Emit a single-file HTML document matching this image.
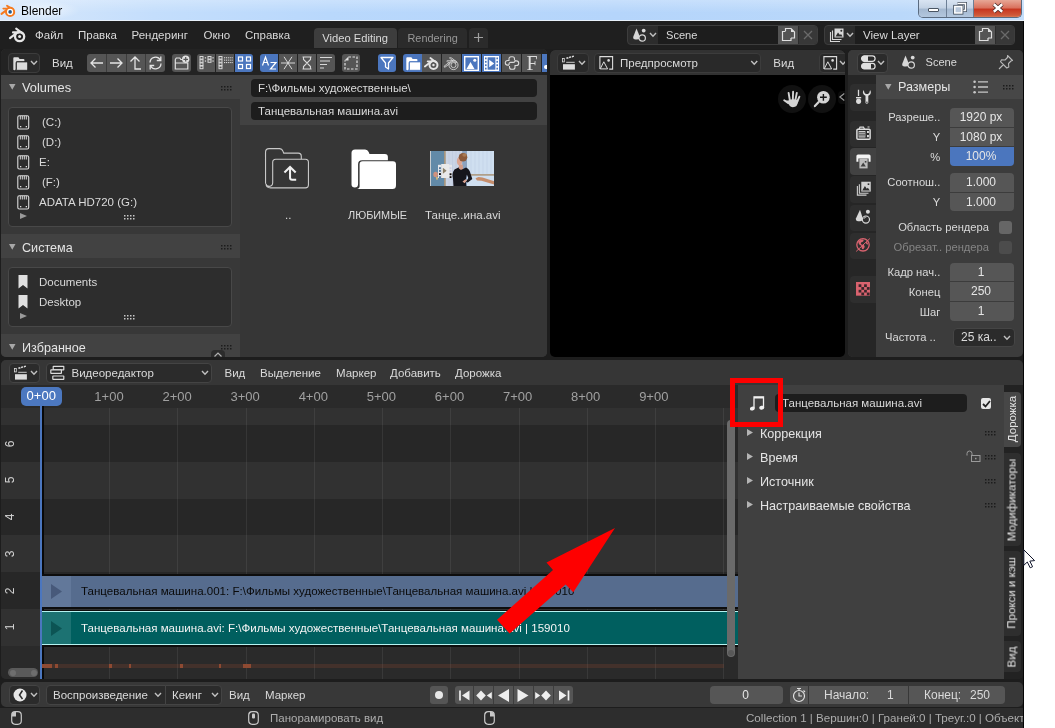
<!DOCTYPE html>
<html>
<head>
<meta charset="utf-8">
<title>Blender</title>
<style>
*{box-sizing:border-box;margin:0;padding:0}
html,body{width:1055px;height:728px;overflow:hidden;background:#fff}
body{font-family:"Liberation Sans",sans-serif;font-size:11.5px;color:#e0e0e0;position:relative}
.abs,.abs>*{position:absolute}
#win{position:absolute;left:0;top:0;width:1024px;height:728px;background:#1d1d1d;overflow:hidden;will-change:transform}
#win div,#win span,#win svg{position:absolute}
.t{white-space:pre;line-height:14px;height:14px;color:#dadada}
.b{background:#555;border-radius:3px}
.bl{background:#4b76be}
.fld{background:#1d1d1d;border-radius:4px}
.dd{background:#2a2a2a;border:1px solid #3c3c3c;border-radius:4px}
.num{background:#565656;text-align:center;padding-right:2px;color:#e6e6e6;line-height:18px;font-size:12px}
svg{overflow:visible}
</style>
</head>
<body>
<div id="win">

<!-- ===== Title bar (Win7 aero) ===== -->
<div id="title" style="left:0;top:0;width:1024px;height:21px;background:linear-gradient(90deg,#d8e8fb 0%,#c4defc 15%,#b9d8fc 32%,#b5d5fb 60%,#bad8fa 88%,#c4defb 100%)">
  <div style="left:0;top:0;width:1024px;height:21px;background:linear-gradient(180deg,rgba(255,255,255,.25) 0%,rgba(255,255,255,0) 60%)"></div>
  <div style="left:10px;top:1px;width:70px;height:19px;background:radial-gradient(ellipse at center,rgba(255,255,255,.55) 0%,rgba(255,255,255,0) 70%)"></div>
  <!-- blender logo -->
  <svg style="left:0px;top:4px" width="16" height="14" viewBox="0 0 16 14"><g stroke="#f57a1f" stroke-linecap="round" fill="none"><path d="M7 1.700L12.600 5.400" stroke-width="1.900"/><path d="M3.200 4.600H8.800" stroke-width="1.600"/><path d="M1.500 9.900L7.600 5.200" stroke-width="2"/></g><circle cx="10.100" cy="7.900" r="4.100" fill="#fff" stroke="#f57a1f" stroke-width="2"/><circle cx="10.100" cy="7.900" r="1.800" fill="#265a8c"/></svg>
  <span class="t" style="left:21px;top:4px;font-size:12px;color:#000;line-height:15px;height:15px">Blender</span>
  <!-- window buttons -->
  <div style="left:918px;top:0;width:104px;height:18px;border-radius:0 0 5px 5px;border:1px solid #5a6b80;border-top:none;background:#c5d6ea;overflow:hidden">
    <div style="left:0;top:0;width:28px;height:18px;background:linear-gradient(180deg,#d9e4f2 0%,#c3d2e4 45%,#a4b8d0 50%,#b5c9e0 100%);border-right:1px solid #6d7f96"></div>
    <div style="left:28px;top:0;width:27px;height:18px;background:linear-gradient(180deg,#d9e4f2 0%,#c3d2e4 45%,#a4b8d0 50%,#b5c9e0 100%);border-right:1px solid #6d7f96"></div>
    <div style="left:55px;top:0;width:48px;height:18px;background:linear-gradient(180deg,#e7a796 0%,#d9705c 45%,#c6351f 50%,#cf5a3b 85%,#e08d62 100%)"></div>
    <div style="left:9px;top:8px;width:11px;height:4px;background:#fff;border:1px solid #4a5563;border-radius:1px"></div>
    <svg style="left:34px;top:2px" width="14" height="13" viewBox="0 0 14 13"><path d="M4.5 1.5h8v7h-2.5" fill="none" stroke="#4a5563" stroke-width="3"/><path d="M4.5 1.5h8v7h-2.5" fill="none" stroke="#fff" stroke-width="1.4"/><rect x="1.8" y="4.5" width="7" height="6.5" fill="none" stroke="#4a5563" stroke-width="3.2"/><rect x="1.8" y="4.5" width="7" height="6.5" fill="#b9c8db" stroke="#fff" stroke-width="1.5"/></svg>
    <svg style="left:73px;top:3px" width="12" height="10" viewBox="0 0 14 12"><path d="M2 1.5 L12 10.5 M12 1.5 L2 10.5" stroke="#4b2a26" stroke-width="5" stroke-linecap="butt"/><path d="M2 1.5 L12 10.5 M12 1.5 L2 10.5" stroke="#fff" stroke-width="3" stroke-linecap="butt"/></svg>
  </div>
</div>
<div style="left:0;top:20px;width:1024px;height:1px;background:#e8f1fb"></div>

<!-- ===== Top bar ===== -->
<div id="topbar" style="left:0;top:21px;width:1024px;height:28px;background:#1f1f1f">
  <svg style="left:8px;top:6px" width="19" height="16" viewBox="0 0 19 16">
    <path d="M2 11.2 L9.4 5.4 L5 5.4 M9.8 5.4 L11 5.4 M8.2 1.6 L14.4 6.4" fill="none" stroke="#e6e6e6" stroke-width="2.1" stroke-linecap="round"/>
    <circle cx="11.6" cy="9.6" r="4.6" fill="none" stroke="#e6e6e6" stroke-width="2.3"/>
    <circle cx="11.6" cy="9.6" r="1.5" fill="#e6e6e6"/>
  </svg>
  <span class="t" style="left:35px;top:7px">Файл</span>
  <span class="t" style="left:78px;top:7px">Правка</span>
  <span class="t" style="left:131.5px;top:7px">Рендеринг</span>
  <span class="t" style="left:203.5px;top:7px">Окно</span>
  <span class="t" style="left:245px;top:7px">Справка</span>
  <div style="left:314px;top:7px;width:83px;height:19.500px;background:#3d3d3d;border-radius:4px 4px 0 0"></div>
  <span class="t" style="left:322.300px;top:10px;font-size:11.200px">Video Editing</span>
  <div style="left:398px;top:7px;width:69px;height:19.500px;background:#2b2b2b;border-radius:4px 4px 0 0"></div>
  <span class="t" style="left:407.500px;top:10px;color:#989898;font-size:10.900px">Rendering</span>
  <div style="left:469px;top:7px;width:18.500px;height:19.500px;background:#2b2b2b;border-radius:4px 4px 0 0"></div>
  <svg style="left:473px;top:11px" width="11" height="11" viewBox="0 0 11 11"><path d="M5.5 1v9M1 5.500h9" stroke="#a0a0a0" stroke-width="1.2"/></svg>

  <!-- scene selector -->
  <div style="left:627px;top:4px;width:191px;height:20px;background:#2c2c2c;border:1px solid #3d3d3d;border-radius:4px"></div>
  <div style="left:658px;top:5px;width:120px;height:18px;background:#1d1d1d"></div>
  <div style="left:778px;top:5px;width:20px;height:18px;background:#545454"></div>
  <div style="left:798.500px;top:5px;width:18.500px;height:18px;background:#383838;border-radius:0 3px 3px 0"></div>
  <svg style="left:632px;top:6px" width="16" height="16" viewBox="0 0 16 16"><path d="M4.5 1.500 L8 10 Q8 12.500 5 12.500 L3.500 12.500 Q1 12.500 1.200 10 Z" fill="#d8d8d8"/><circle cx="11.700" cy="3.600" r="1.900" fill="#d8d8d8"/><circle cx="10.200" cy="11" r="3.200" fill="#2c2c2c" stroke="#d8d8d8" stroke-width="1.200"/></svg>
  <svg style="left:649px;top:11px" width="8" height="6" viewBox="0 0 8 6"><path d="M1 1l3 3.200 3-3.200" fill="none" stroke="#c0c0c0" stroke-width="1.400"/></svg>
  <span class="t" style="left:666px;top:7px;font-size:11.100px">Scene</span>
  <svg style="left:781px;top:6px" width="15" height="15" viewBox="0 0 15 15"><path d="M4.500 4v-2.500h5.500l3.500 3.500v6h-3.500" fill="none" stroke="#e0e0e0" stroke-width="1.200"/><path d="M10 1.500v3.500h3.500z" fill="#e0e0e0"/><path d="M4.500 4.500h-3v9h8.500v-2.500" fill="none" stroke="#e0e0e0" stroke-width="1.200"/></svg>
  <svg style="left:803px;top:9px" width="10" height="10" viewBox="0 0 10 10"><path d="M1 1l8 8M9 1l-8 8" stroke="#6a6a6a" stroke-width="1.300"/></svg>

  <!-- view layer selector -->
  <div style="left:824px;top:4px;width:191px;height:20px;background:#2c2c2c;border:1px solid #3d3d3d;border-radius:4px"></div>
  <div style="left:855px;top:5px;width:120px;height:18px;background:#1d1d1d"></div>
  <div style="left:975px;top:5px;width:20px;height:18px;background:#545454"></div>
  <div style="left:995.500px;top:5px;width:18.500px;height:18px;background:#383838;border-radius:0 3px 3px 0"></div>
  <svg style="left:829px;top:6px" width="16" height="16" viewBox="0 0 16 16"><path d="M1.500 5v9.500h9.500" fill="none" stroke="#d8d8d8" stroke-width="1.100"/><path d="M3.500 3.500v9h9" fill="none" stroke="#d8d8d8" stroke-width="1.100"/><rect x="5.500" y="1.500" width="9" height="9" fill="#d8d8d8"/><path d="M6.500 9.500l2.500-4 2 2.500 1-1 1.500 2.500z" fill="#2c2c2c"/><circle cx="12.300" cy="3.800" r="1" fill="#2c2c2c"/></svg>
  <svg style="left:846px;top:11px" width="8" height="6" viewBox="0 0 8 6"><path d="M1 1l3 3.200 3-3.200" fill="none" stroke="#c0c0c0" stroke-width="1.400"/></svg>
  <span class="t" style="left:863px;top:7px">View Layer</span>
  <svg style="left:978px;top:6px" width="15" height="15" viewBox="0 0 15 15"><path d="M4.500 4v-2.500h5.500l3.500 3.500v6h-3.500" fill="none" stroke="#e0e0e0" stroke-width="1.200"/><path d="M10 1.500v3.500h3.500z" fill="#e0e0e0"/><path d="M4.500 4.500h-3v9h8.500v-2.500" fill="none" stroke="#e0e0e0" stroke-width="1.200"/></svg>
  <svg style="left:1000px;top:9px" width="10" height="10" viewBox="0 0 10 10"><path d="M1 1l8 8M9 1l-8 8" stroke="#6a6a6a" stroke-width="1.300"/></svg>
</div>

<!-- ===== File browser area ===== -->
<div id="fb" style="left:1px;top:49px;width:546.300px;height:308px;background:#383838;border-radius:5px;overflow:hidden">
  <div id="fbhead" style="left:0;top:0;width:547px;height:26px;background:#232323"></div>
  <div class="dd" style="left:7.300px;top:4px;width:31.700px;height:20px"></div>
  <svg style="left:11.700px;top:7.700px" width="15" height="13.500" viewBox="0 0 15 13.500"><path d="M.3 12.600V1.200q0-.9.900-.9h3.800q.7 0 1 .6l.5 1h4q.9 0 .9.900v1.500h-7.400q-1.300 0-1.300 1.300v6.600q0 1.100-1.200 1.100-1.200 0-1.200-.7z" fill="#dcdcdc"/><path d="M3.400 6q0-1.100 1.100-1.100h9.100q1.100 0 1.100 1.100v6.200q0 1.100-1.100 1.100h-11q1-.3.800-1.300z" fill="#dcdcdc" stroke="#2a2a2a" stroke-width=".9"/></svg>
  <svg style="left:29px;top:11px" width="8" height="6" viewBox="0 0 8 6"><path d="M1 1l3 3.200 3-3.200" fill="none" stroke="#c0c0c0" stroke-width="1.400"/></svg>
  <span class="t" style="left:51px;top:7px">Вид</span>
  <div style="left:86px;top:5px;width:78px;height:18px;background:#555;border-radius:3px"></div><div style="left:105px;top:5px;width:1px;height:18px;background:#3c3c3c"></div><div style="left:124.500px;top:5px;width:1px;height:18px;background:#3c3c3c"></div><div style="left:144px;top:5px;width:1px;height:18px;background:#3c3c3c"></div>
  
  
  
  <svg style="left:88px;top:7px" width="15" height="14" viewBox="0 0 15 14"><path d="M14 7h-12M6.500 2.500l-4.500 4.500 4.500 4.500" fill="none" stroke="#e4e4e4" stroke-width="1.300"/></svg>
  <svg style="left:108px;top:7px" width="15" height="14" viewBox="0 0 15 14"><path d="M1 7h12M8.500 2.500l4.500 4.500-4.500 4.500" fill="none" stroke="#e4e4e4" stroke-width="1.300"/></svg>
  <svg style="left:127px;top:6px" width="15" height="16" viewBox="0 0 15 16"><path d="M7 2v12h6M2.500 6.500l4.500-4.500 4.500 4.500" fill="none" stroke="#e4e4e4" stroke-width="1.300"/></svg>
  <svg style="left:147px;top:6px" width="15" height="16" viewBox="0 0 15 16"><path d="M2 7.500a5.500 5.500 0 0 1 10.300-2.500M13 8.500a5.500 5.500 0 0 1-10.300 2.500" fill="none" stroke="#e4e4e4" stroke-width="1.300"/><path d="M12.800 1.500v4h-4M2.200 14.500v-4h4" fill="none" stroke="#e4e4e4" stroke-width="1.300"/></svg>
  <div class="b" style="left:171px;top:5px;width:19px;height:18px"></div>
  <svg style="left:173px;top:6px" width="16" height="16" viewBox="0 0 16 16"><path d="M1.300 4.500v9.500h12.500v-6.500M1.300 8h12.500M1.300 4.500l1-1.500h3.500l1 1.500h2" fill="none" stroke="#e0e0e0" stroke-width="1.200"/><circle cx="11.700" cy="4.300" r="3.700" fill="#e0e0e0"/><path d="M11.700 2v4.600M9.400 4.300h4.600" stroke="#555" stroke-width="1.200"/></svg>
  <div style="left:196px;top:5px;width:18px;height:18px;background:#555;border-radius:3px 0 0 3px"></div>
  <div style="left:215px;top:5px;width:18px;height:18px;background:#555;border-radius:0"></div>
  <div style="left:234px;top:5px;width:18px;height:18px;background:#4b76be;border-radius:0 3px 3px 0"></div>
  <svg style="left:198px;top:7px" width="15" height="14" viewBox="0 0 15 14"><g fill="none" stroke="#d8d8d8" stroke-width="1"><rect x="1" y=".5" width="3" height="2.600"/><rect x="1" y="3.700" width="3" height="2.600"/><rect x="1" y="6.900" width="3" height="2.600"/><rect x="1" y="10.100" width="3" height="2.600"/><rect x="9" y=".5" width="3" height="2.600"/><rect x="9" y="3.700" width="3" height="2.600"/></g><g fill="#d8d8d8"><rect x="5.800" y="1.200" width="1.300" height="1.300"/><rect x="5.800" y="4.400" width="1.300" height="1.300"/><rect x="13.400" y="1.200" width="1.300" height="1.300"/><rect x="13.400" y="4.400" width="1.300" height="1.300"/></g></svg>
  <svg style="left:217px;top:7px" width="15" height="14" viewBox="0 0 15 14"><g fill="none" stroke="#d8d8d8" stroke-width="1"><rect x="1" y=".5" width="3" height="2.600"/><rect x="1" y="3.700" width="3" height="2.600"/><rect x="1" y="6.900" width="3" height="2.600"/><rect x="1" y="10.100" width="3" height="2.600"/></g><g fill="#d8d8d8"><rect x="6.0" y="1.2" width="1.100" height="1.100"/><rect x="6.0" y="3.6" width="1.100" height="1.100"/><rect x="6.0" y="6.0" width="1.100" height="1.100"/><rect x="7.9" y="1.2" width="1.100" height="1.100"/><rect x="7.9" y="3.6" width="1.100" height="1.100"/><rect x="7.9" y="6.0" width="1.100" height="1.100"/><rect x="9.8" y="1.2" width="1.100" height="1.100"/><rect x="9.8" y="3.6" width="1.100" height="1.100"/><rect x="9.8" y="6.0" width="1.100" height="1.100"/><rect x="11.7" y="1.2" width="1.100" height="1.100"/><rect x="11.7" y="3.6" width="1.100" height="1.100"/><rect x="11.7" y="6.0" width="1.100" height="1.100"/><rect x="13.6" y="1.2" width="1.100" height="1.100"/><rect x="13.6" y="3.6" width="1.100" height="1.100"/><rect x="13.6" y="6.0" width="1.100" height="1.100"/></g></svg>
  <svg style="left:236px;top:7px" width="15" height="14" viewBox="0 0 15 14"><g fill="none" stroke="#fff" stroke-width="1.200"><rect x="1.500" y="1" width="4" height="4"/><rect x="9.500" y="1" width="4" height="4"/><rect x="1.500" y="8.500" width="4" height="4"/><rect x="9.500" y="8.500" width="4" height="4"/></g></svg>
  <div style="left:259px;top:5px;width:18px;height:18px;background:#4b76be;border-radius:3px 0 0 3px"></div>
  <div style="left:278px;top:5px;width:18px;height:18px;background:#555;border-radius:0"></div>
  <div style="left:297px;top:5px;width:18px;height:18px;background:#555;border-radius:0"></div>
  <div style="left:316px;top:5px;width:18px;height:18px;background:#555;border-radius:0 3px 3px 0"></div>
  <svg style="left:260px;top:6px" width="17" height="16" viewBox="0 0 17 16"><path d="M1.500 10.500l3-8.500 3 8.500M2.600 7.500h3.800" fill="none" stroke="#fff" stroke-width="1.200"/><path d="M9.500 7.500h5.500l-5.500 6.500h5.500" fill="none" stroke="#fff" stroke-width="1.200"/></svg>
  <svg style="left:280px;top:7px" width="14" height="14" viewBox="0 0 14 14"><path d="M0 7h14M3 .8l8 12.400M11 .8l-8 12.400" stroke="#d8d8d8" stroke-width="1"/></svg>
  <svg style="left:299px;top:7px" width="14" height="14" viewBox="0 0 14 14"><path d="M2.500 1h9M2.500 13h9M3.500 1v2.500l3.500 3.500 3.500-3.500v-2.500M3.500 13v-2.500l3.500-3.500 3.500 3.500v2.500" fill="none" stroke="#d8d8d8" stroke-width="1.100"/></svg>
  <svg style="left:318px;top:7px" width="14" height="14" viewBox="0 0 14 14"><path d="M1 1.500h12M1 5h10M1 8.500h7M1 12h4" stroke="#d8d8d8" stroke-width="1.200"/></svg>
  <div class="b" style="left:341px;top:5px;width:18px;height:18px"></div>
  <svg style="left:343px;top:7px" width="14" height="14" viewBox="0 0 14 14"><path d="M4.500 1h8.500v12h-12v-8.500" fill="none" stroke="#e0e0e0" stroke-width="1.200" stroke-dasharray="2.500 1.500"/><path d="M.5 4.500l4-4v4z" fill="#e0e0e0"/></svg>
  <div class="b bl" style="left:377px;top:5px;width:18px;height:18px"></div>
  <svg style="left:379px;top:7px" width="14" height="14" viewBox="0 0 14 14"><path d="M1 1.500h12l-4.500 5.500v6l-3-2v-4z" fill="none" stroke="#fff" stroke-width="1.300" stroke-linejoin="round"/></svg>
  <div style="left:402px;top:5px;width:19px;height:18px;background:#4b76be;border-radius:3px 0 0 3px"></div>
  <div style="left:421px;top:5px;width:19px;height:18px;background:#555;border-radius:0"></div>
  <div style="left:441px;top:5px;width:19px;height:18px;background:#555;border-radius:0"></div>
  <div style="left:461px;top:5px;width:19px;height:18px;background:#4b76be;border-radius:0"></div>
  <div style="left:481px;top:5px;width:19px;height:18px;background:#4b76be;border-radius:0"></div>
  <div style="left:501px;top:5px;width:19px;height:18px;background:#555;border-radius:0"></div>
  <div style="left:521px;top:5px;width:19px;height:18px;background:#555;border-radius:0"></div>
  <div style="left:541px;top:5px;width:6px;height:18px;background:#4b76be;border-radius:0"></div>
  <svg style="left:404.500px;top:7.500px" width="15" height="13.500" viewBox="0 0 15 13.500"><path d="M.3 12.600V1.200q0-.9.900-.9h3.800q.7 0 1 .6l.5 1h4q.9 0 .9.900v1.500h-7.400q-1.300 0-1.300 1.300v6.600q0 1.100-1.200 1.100-1.200 0-1.200-.7z" fill="#fff"/><path d="M3.400 6q0-1.100 1.100-1.100h9.100q1.100 0 1.100 1.100v6.200q0 1.100-1.100 1.100h-11q1-.3.800-1.300z" fill="#fff" stroke="#4b76be" stroke-width=".9"/></svg>
  <svg style="left:422px;top:6.500px" width="17" height="15.500" viewBox="0 0 15 14"><path d="M1.500 9.500l6-4.700h-3.500M6.500 1.800l5 3.800" fill="none" stroke="#e4e4e4" stroke-width="1.600" stroke-linecap="round"/><circle cx="9.300" cy="8.200" r="3.600" fill="none" stroke="#e4e4e4" stroke-width="1.800"/><circle cx="9.300" cy="8.200" r="1.100" fill="#e4e4e4"/></svg>
  <svg style="left:442px;top:6.500px" width="17" height="15.500" viewBox="0 0 15 14"><path d="M1.500 9.500l6-4.700h-3.500M6.500 1.800l5 3.800" fill="none" stroke="#d4d4d4" stroke-width="1.900" stroke-linecap="round"/><path d="M1.500 9.500l6-4.700h-3.500M6.500 1.800l5 3.800" fill="none" stroke="#555" stroke-width=".7" stroke-linecap="round"/><circle cx="9.300" cy="8.200" r="4.100" fill="none" stroke="#d4d4d4" stroke-width=".8"/><circle cx="9.300" cy="8.200" r="2.300" fill="none" stroke="#d4d4d4" stroke-width=".8"/></svg>
  <svg style="left:463px;top:6.500px" width="15" height="15" viewBox="0 0 15 15"><rect x=".7" y=".7" width="13.600" height="13.600" fill="none" stroke="#fff" stroke-width="1.400"/><path d="M2.500 13l4-7 4 7z" fill="#fff"/><circle cx="10.800" cy="4.200" r="1.500" fill="#fff"/></svg>
  <svg style="left:483px;top:6.500px" width="15" height="15" viewBox="0 0 15 15"><rect x="0" y="0" width="15" height="15" fill="#fff"/><rect x="3.600" y="1.300" width="7.800" height="12.400" fill="#4b76be"/><g fill="#4b76be"><rect x="1" y="1.500" width="1.600" height="1.800"/><rect x="1" y="4.900" width="1.600" height="1.800"/><rect x="1" y="8.300" width="1.600" height="1.800"/><rect x="1" y="11.700" width="1.600" height="1.800"/><rect x="12.400" y="1.500" width="1.600" height="1.800"/><rect x="12.400" y="4.900" width="1.600" height="1.800"/><rect x="12.400" y="8.300" width="1.600" height="1.800"/><rect x="12.400" y="11.700" width="1.600" height="1.800"/></g><path d="M5.200 3.800l5 3.700-5 3.700z" fill="#fff"/></svg>
  <svg style="left:502.500px;top:6px" width="16" height="16" viewBox="0 0 16 16"><path d="M10.500 5V3.800a2 2 0 0 0-2-2H7a2 2 0 0 0-2 2V5.500H3.600a2.300 2.300 0 0 0 0 4.600H5" fill="none" stroke="#d8d8d8" stroke-width="1.100"/><path d="M5.500 11v1.200a2 2 0 0 0 2 2H9a2 2 0 0 0 2-2V10.500h1.400a2.300 2.300 0 0 0 0-4.600H11" fill="none" stroke="#d8d8d8" stroke-width="1.100"/><path d="M5 10.100V9a1.600 1.600 0 0 1 1.600-1.600h2.800A1.600 1.600 0 0 0 11 5.900V5" fill="none" stroke="#d8d8d8" stroke-width="1.100"/></svg>
  <span style="left:522px;top:3px;width:18px;height:22px;line-height:22px;text-align:center;font-family:'Liberation Serif',serif;font-size:20px;color:#dcdcdc">F</span>
  <div style="left:543px;top:16px;width:5px;height:4px;background:#fff;border-radius:3px 0 0 3px"></div>
  <div id="fbside" style="left:0;top:26px;width:239px;height:282px;background:#383838"></div>
  <div id="fbmain" style="left:239px;top:26px;width:308px;height:282px;background:#363636"></div>
  <div id="fbtop" style="left:239px;top:26px;width:308px;height:50px;background:#424242"></div>
  <div style="left:0;top:26px;width:239px;height:24px;background:#424242"></div>
  <svg style="left:8px;top:35px" width="6.500" height="5.800" viewBox="0 0 8 7"><path d="M0 0h8l-4 7z" fill="#a8a8a8"/></svg>
  <span class="t" style="left:21px;top:31px;font-size:12.600px;line-height:16px;height:16px;color:#e4e4e4;font-size:12.800px">Volumes</span>
  <svg style="left:220px;top:36.500px" width="11" height="5" viewBox="0 0 11 5"><g fill="#1c1c1c"><rect x="0" y="0" width="1.500" height="1.500"/><rect x="3" y="0" width="1.500" height="1.500"/><rect x="6" y="0" width="1.500" height="1.500"/><rect x="9" y="0" width="1.500" height="1.500"/><rect x="0" y="3" width="1.500" height="1.500"/><rect x="3" y="3" width="1.500" height="1.500"/><rect x="6" y="3" width="1.500" height="1.500"/><rect x="9" y="3" width="1.500" height="1.500"/></g></svg>
  <div style="left:0;top:185.200px;width:239px;height:24.300px;background:#424242"></div>
  <svg style="left:8px;top:195px" width="6.500" height="5.800" viewBox="0 0 8 7"><path d="M0 0h8l-4 7z" fill="#a8a8a8"/></svg>
  <span class="t" style="left:21px;top:191px;font-size:12.600px;line-height:16px;height:16px;color:#e4e4e4">Система</span>
  <svg style="left:220px;top:196px" width="11" height="5" viewBox="0 0 11 5"><g fill="#1c1c1c"><rect x="0" y="0" width="1.500" height="1.500"/><rect x="3" y="0" width="1.500" height="1.500"/><rect x="6" y="0" width="1.500" height="1.500"/><rect x="9" y="0" width="1.500" height="1.500"/><rect x="0" y="3" width="1.500" height="1.500"/><rect x="3" y="3" width="1.500" height="1.500"/><rect x="6" y="3" width="1.500" height="1.500"/><rect x="9" y="3" width="1.500" height="1.500"/></g></svg>
  <div style="left:0;top:285.200px;width:239px;height:24px;background:#424242"></div>
  <svg style="left:8px;top:295px" width="6.500" height="5.800" viewBox="0 0 8 7"><path d="M0 0h8l-4 7z" fill="#a8a8a8"/></svg>
  <span class="t" style="left:21px;top:291px;font-size:12.600px;line-height:16px;height:16px;color:#e4e4e4">Избранное</span>
  <svg style="left:220px;top:296px" width="11" height="5" viewBox="0 0 11 5"><g fill="#1c1c1c"><rect x="0" y="0" width="1.500" height="1.500"/><rect x="3" y="0" width="1.500" height="1.500"/><rect x="6" y="0" width="1.500" height="1.500"/><rect x="9" y="0" width="1.500" height="1.500"/><rect x="0" y="3" width="1.500" height="1.500"/><rect x="3" y="3" width="1.500" height="1.500"/><rect x="6" y="3" width="1.500" height="1.500"/><rect x="9" y="3" width="1.500" height="1.500"/></g></svg>
  <div style="left:7px;top:57.500px;width:223.500px;height:120.500px;background:#2d2d2d;border:1px solid #484848;border-radius:4px"></div>
  <div style="left:7px;top:217.500px;width:223.500px;height:60px;background:#2d2d2d;border:1px solid #484848;border-radius:4px"></div>
  <svg style="left:16px;top:66px" width="13" height="15" viewBox="0 0 13 15"><rect x=".8" y=".8" width="10.900" height="13.200" rx="1.500" fill="none" stroke="#dcdcdc" stroke-width="1.100"/><path d="M3.300 1v3.500M5.300 1v3.500M7.300 1v3.500M9.300 1v3.500" stroke="#dcdcdc" stroke-width="1"/><rect x="3" y="11" width="1.300" height="1.300" fill="#e0e0e0"/><rect x="8.700" y="11" width="1.300" height="1.300" fill="#e0e0e0"/></svg>
  <span class="t" style="left:41px;top:66px">(C:)</span>
  <svg style="left:16px;top:86px" width="13" height="15" viewBox="0 0 13 15"><rect x=".8" y=".8" width="10.900" height="13.200" rx="1.500" fill="none" stroke="#dcdcdc" stroke-width="1.100"/><path d="M3.300 1v3.500M5.300 1v3.500M7.300 1v3.500M9.300 1v3.500" stroke="#dcdcdc" stroke-width="1"/><rect x="3" y="11" width="1.300" height="1.300" fill="#e0e0e0"/><rect x="8.700" y="11" width="1.300" height="1.300" fill="#e0e0e0"/></svg>
  <span class="t" style="left:41px;top:86px">(D:)</span>
  <svg style="left:16px;top:106px" width="13" height="15" viewBox="0 0 13 15"><rect x=".8" y=".8" width="10.900" height="13.200" rx="1.500" fill="none" stroke="#dcdcdc" stroke-width="1.100"/><path d="M3.300 1v3.500M5.300 1v3.500M7.300 1v3.500M9.300 1v3.500" stroke="#dcdcdc" stroke-width="1"/><rect x="3" y="11" width="1.300" height="1.300" fill="#e0e0e0"/><rect x="8.700" y="11" width="1.300" height="1.300" fill="#e0e0e0"/></svg>
  <span class="t" style="left:38px;top:106px">E:</span>
  <svg style="left:16px;top:126px" width="13" height="15" viewBox="0 0 13 15"><rect x=".8" y=".8" width="10.900" height="13.200" rx="1.500" fill="none" stroke="#dcdcdc" stroke-width="1.100"/><path d="M3.300 1v3.500M5.300 1v3.500M7.300 1v3.500M9.300 1v3.500" stroke="#dcdcdc" stroke-width="1"/><rect x="3" y="11" width="1.300" height="1.300" fill="#e0e0e0"/><rect x="8.700" y="11" width="1.300" height="1.300" fill="#e0e0e0"/></svg>
  <span class="t" style="left:41px;top:126px">(F:)</span>
  <svg style="left:16px;top:146px" width="13" height="15" viewBox="0 0 13 15"><rect x=".8" y=".8" width="10.900" height="13.200" rx="1.500" fill="none" stroke="#dcdcdc" stroke-width="1.100"/><path d="M3.300 1v3.500M5.300 1v3.500M7.300 1v3.500M9.300 1v3.500" stroke="#dcdcdc" stroke-width="1"/><rect x="3" y="11" width="1.300" height="1.300" fill="#e0e0e0"/><rect x="8.700" y="11" width="1.300" height="1.300" fill="#e0e0e0"/></svg>
  <span class="t" style="left:38px;top:146px">ADATA HD720 (G:)</span>
  <svg style="left:17px;top:226px" width="10" height="14" viewBox="0 0 10 14"><path d="M.5 0h9v13.500l-4.500-3.500-4.500 3.500z" fill="#e0e0e0"/></svg>
  <span class="t" style="left:38px;top:226px">Documents</span>
  <svg style="left:17px;top:246px" width="10" height="14" viewBox="0 0 10 14"><path d="M.5 0h9v13.500l-4.500-3.500-4.500 3.500z" fill="#e0e0e0"/></svg>
  <span class="t" style="left:38px;top:246px">Desktop</span>
  <svg style="left:19px;top:164px" width="7" height="6" viewBox="0 0 7 6"><path d="M0 0l7 3-7 3z" fill="#9a9a9a"/></svg>
  <svg style="left:123px;top:166px" width="11" height="5" viewBox="0 0 11 5"><g fill="#c8c8c8"><rect x="0" y="0" width="1.500" height="1.500"/><rect x="3" y="0" width="1.500" height="1.500"/><rect x="6" y="0" width="1.500" height="1.500"/><rect x="9" y="0" width="1.500" height="1.500"/><rect x="0" y="3" width="1.500" height="1.500"/><rect x="3" y="3" width="1.500" height="1.500"/><rect x="6" y="3" width="1.500" height="1.500"/><rect x="9" y="3" width="1.500" height="1.500"/></g></svg>
  <svg style="left:19px;top:264px" width="7" height="6" viewBox="0 0 7 6"><path d="M0 0l7 3-7 3z" fill="#9a9a9a"/></svg>
  <svg style="left:123px;top:266px" width="11" height="5" viewBox="0 0 11 5"><g fill="#c8c8c8"><rect x="0" y="0" width="1.500" height="1.500"/><rect x="3" y="0" width="1.500" height="1.500"/><rect x="6" y="0" width="1.500" height="1.500"/><rect x="9" y="0" width="1.500" height="1.500"/><rect x="0" y="3" width="1.500" height="1.500"/><rect x="3" y="3" width="1.500" height="1.500"/><rect x="6" y="3" width="1.500" height="1.500"/><rect x="9" y="3" width="1.500" height="1.500"/></g></svg>
  <div style="left:210px;top:301px;width:14px;height:8px;background:#2c2c2c;border-radius:4px 4px 0 0"></div>
  <svg style="left:213px;top:303px" width="8" height="5" viewBox="0 0 8 5"><path d="M.5 4.500l3.500-3.500 3.500 3.500" fill="none" stroke="#b0b0b0" stroke-width="1.200"/></svg>
  <div class="fld" style="left:250px;top:30px;width:286px;height:18px"></div>
  <span class="t" style="left:257px;top:32px">F:\Фильмы художественные\</span>
  <div class="fld" style="left:250px;top:53px;width:286px;height:18px"></div>
  <span class="t" style="left:257px;top:55px">Танцевальная машина.avi</span>
  <svg style="left:262.500px;top:98px" width="47" height="43" viewBox="0 0 46 42"><path d="M1.500 36v-31q0-3.500 3.500-3.500h10q2.500 0 3.500 2.500l.8 2h14.200q3 0 3 3v3" fill="none" stroke="#c8c8c8" stroke-width="1.100"/><path d="M8.500 15q0-3 3-3h29q3 0 3 3v22q0 3-3 3h-34q-4.500 0-4.500-4 0 2.500 3.200 2.500t3.300-3.500z" fill="none" stroke="#c8c8c8" stroke-width="1.100"/><path d="M20 25l5.500-5.500 5.500 5.500M25.500 20v10q0 2 2 2h4" fill="none" stroke="#f0f0f0" stroke-width="2"/></svg>
  <span class="t" style="left:284px;top:159px">..</span>
  <svg style="left:350px;top:100px" width="46.500" height="41.500" viewBox="0 0 46 41"><path d="M.5 35v-31q0-3.500 3.500-3.500h10q2.500 0 3.500 2.500l.8 2h15.200q3 0 3 3v3h-25.500q-4 0-4 4v19.500q0 3.500-3.200 3.500t-3.300-3z" fill="#fff"/><path d="M8.500 15q0-3 3-3h30q3 0 3 3v21q0 3.500-3.500 3.500h-35q3-.5 2.500-4z" fill="#fff"/></svg>
  <span class="t" style="left:347px;top:159px;font-size:10.900px">ЛЮБИМЫЕ</span>
  <span class="t" style="left:424px;top:159px">Танце..ина.avi</span>
  <svg style="left:429px;top:102px" width="64" height="35" viewBox="0 0 64 35">
<defs><filter id="bl" x="-5%" y="-5%" width="110%" height="110%"><feGaussianBlur stdDeviation=".55"/></filter><clipPath id="tc"><rect width="64" height="35"/></clipPath></defs>
<g clip-path="url(#tc)"><rect width="64" height="35" fill="#cddcec"/>
<g filter="url(#bl)">
<rect x="-1" y="-1" width="15.300" height="37" fill="#628aa8"/>
<rect x="-1" y="-1" width="2" height="37" fill="#c8ccd0"/>
<rect x="14.200" y="-1" width="1.600" height="37" fill="#a38b6a"/>
<rect x="15.800" y="-1" width="16.400" height="37" fill="#cad4e5"/>
<path d="M19 -1v37M22.500 -1v37M26 -1v37M29.500 -1v37" stroke="#bcc8dc" stroke-width=".6"/>
<rect x="32.200" y="-1" width="4.800" height="37" fill="#8ca3c0"/>
<rect x="37" y="-1" width="28" height="37" fill="#cfdff0"/>
<path d="M41 -1v24M45 -1v24M49 -1v24M53 -1v24M57 -1v24M61 -1v24" stroke="#c0d2e6" stroke-width=".6"/>
<rect x="39" y="23.200" width="26" height="1.400" fill="#a89070"/>
<path d="M23.500 36l-.5-8.500q-1.500-5 1.500-9l4.500-2.200 3.500 2 3.500-1.800q3.500 1.500 4.500 6l1.800 5.500-4.500 3.500-2-.5 2.500-4-1.500-3.500-1.200 6 .8 6.500z" fill="#15121a"/>
<path d="M28.800 13.500l3.900 0 .3 4.200-2 1.300-2.200-1.600z" fill="#d39c88"/>
<ellipse cx="29.500" cy="10.200" rx="2.600" ry="3.900" fill="#dba592"/>
<ellipse cx="33" cy="6.300" rx="4.300" ry="4.200" fill="#8b5a3a"/>
<ellipse cx="34.500" cy="4" rx="2.200" ry="1.800" fill="#a87a54"/>
<path d="M45.500 27.200l3-1.200 4 .6 12.500 3.800v3.300l-13.500-4-4.500-.3z" fill="#c58d6c"/>
<ellipse cx="5.600" cy="23.500" rx="2.300" ry="2.700" fill="#cf927e"/>
<rect x="6" y="26" width="2" height="2.600" fill="#c8b27a"/>
<path d="M32.500 30.500l3-2.200 1.500 1-2.500 3z" fill="#dba592"/>
</g>
<rect x="11.200" y="13" width="8" height="14" fill="#e9e9e9"/>
<rect x="8" y="13.800" width="3.300" height="13.200" fill="#e4e6ea"/><rect x="19" y="13.800" width="3" height="13.200" fill="#e4e6ea"/>
<g fill="#54769a"><rect x="9" y="16.200" width="1.900" height="1.900"/><rect x="9" y="19" width="1.900" height="1.900"/><rect x="9" y="25.200" width="1.900" height="1.800"/></g>
<g fill="#cdd0e6"><rect x="19.600" y="16.200" width="1.900" height="1.900"/><rect x="19.600" y="19" width="1.900" height="1.900"/></g>
<g fill="#0c0707"><rect x="9" y="22.100" width="1.900" height="1.900"/><rect x="19.600" y="22.300" width="1.900" height="1.900"/><rect x="19.600" y="25.200" width="1.900" height="1.800"/></g>
<path d="M12.900 16.800l3.700 2.900-3.700 3z" fill="#8c8068"/>
</g></svg>
</div>

<!-- ===== Preview area ===== -->
<div id="pv" style="left:550px;top:50px;width:295px;height:307px;background:#000;border-radius:5px;overflow:hidden">
  <div id="pvhead" style="left:0;top:0;width:296px;height:25px;background:#323232"></div>
  <div class="dd" style="left:7px;top:3px;width:32px;height:20px;background:#292929"></div>
  <svg style="left:11px;top:5px" width="15" height="15" viewBox="0 0 15 15"><rect x="1.400" y="3.500" width="1.900" height="3.400" fill="none" stroke="#dcdcdc" stroke-width=".8"/><path d="M5.200 2.600l2-.6.400 1.400-2 .6zM7.900 1.800l2-.6.400 1.400-2 .6zM10.700 1l2-.6.400 1.400-2 .6z" fill="#dcdcdc"/><path d="M5.200 7.300h8.500" stroke="#dcdcdc" stroke-width=".9"/><rect x="2" y="9.200" width="11.900" height="5.400" fill="#dcdcdc"/></svg>
  <svg style="left:28px;top:10px" width="8" height="6" viewBox="0 0 8 6"><path d="M1 1l3 3.200 3-3.200" fill="none" stroke="#c0c0c0" stroke-width="1.400"/></svg>
  <div class="dd" style="left:44px;top:3px;width:167px;height:20px;background:#292929"></div>
  <svg style="left:49px;top:5px" width="15" height="15" viewBox="0 0 15 15"><path d="M.9 14V1.600H13.600V14.100H10.200" fill="none" stroke="#dcdcdc" stroke-width="1.100"/><path d="M1.200 13.900L4.800 6.800 8.600 13.900z" fill="none" stroke="#dcdcdc" stroke-width="1"/><circle cx="9.600" cy="5.400" r="1.300" fill="#dcdcdc"/></svg>
  <span class="t" style="left:70px;top:6px">Предпросмотр</span>
  <svg style="left:200px;top:10px" width="8.500" height="6" viewBox="0 0 8 6"><path d="M1 1l3 3.200 3-3.200" fill="none" stroke="#c0c0c0" stroke-width="1.400"/></svg>
  <span class="t" style="left:223.3px;top:6px">Вид</span>
  <div class="dd" style="left:268.5px;top:3px;width:40px;height:20px;background:#292929"></div>
  <svg style="left:273px;top:5px" width="15" height="15" viewBox="0 0 15 15"><path d="M.9 14V1.600H13.600V14.100H10.200" fill="none" stroke="#dcdcdc" stroke-width="1.100"/><path d="M1.200 13.900L4.800 6.800 8.600 13.900z" fill="none" stroke="#dcdcdc" stroke-width="1"/><circle cx="9.600" cy="5.400" r="1.300" fill="#dcdcdc"/></svg>
  <svg style="left:289px;top:10px" width="8" height="6" viewBox="0 0 8 6"><path d="M1 1l3 3.200 3-3.200" fill="none" stroke="#c0c0c0" stroke-width="1.400"/></svg>
  <div style="left:228px;top:35px;width:27.800px;height:27.800px;border-radius:14px;background:#111"></div>
  <div style="left:258.2px;top:35px;width:27.800px;height:27.800px;border-radius:14px;background:#111"></div>
  <div style="left:287.5px;top:40.5px;width:10px;height:13.500px;border-radius:4px;background:#0b0b0b"></div>
  <svg style="left:233px;top:40px" width="18" height="18" viewBox="0 0 18 18"><g stroke="#d4d4d4" stroke-width="1.900" stroke-linecap="round" fill="none"><path d="M5.600 2.900L6.900 10.500"/><path d="M10.100 1.700L9.800 10.500"/><path d="M13.800 2.900L12.300 10.500"/><path d="M16.400 6.700L14.500 11"/><path d="M1.200 10.200L5.400 13.200"/></g><path d="M5 10.800Q10 8 15.400 10.600Q14.800 17.300 9.800 17.300Q5.500 17 5 10.800Z" fill="#d4d4d4"/><path d="M1.500 10.500L5.500 10.500 7 15z" fill="#d4d4d4"/></svg>
  <svg style="left:263px;top:39px" width="19" height="19" viewBox="0 0 19 19"><circle cx="10.400" cy="8.300" r="6.300" fill="#d4d4d4"/><path d="M5.700 13.100l-3.800 4" stroke="#d4d4d4" stroke-width="2.200" stroke-linecap="round"/><path d="M10.400 4.900v6.800M7 8.300h6.800" stroke="#161616" stroke-width="1.400"/></svg>
  <svg style="left:288.5px;top:43px" width="6" height="8" viewBox="0 0 6 8"><path d="M5.300 .5l-4.500 3.500 4.500 3.500" fill="none" stroke="#9a9a9a" stroke-width="1.100"/></svg>
</div>

<!-- ===== Properties area ===== -->
<div id="pr" style="left:848px;top:50px;width:175px;height:307px;background:#3c3c3c;border-radius:5px;overflow:hidden">
  <div id="prhead" style="left:0;top:0;width:176px;height:25px;background:#393939"></div>
  <div id="prtabs" style="left:0;top:25px;width:28px;height:282px;background:#262626"></div>
  <div class="dd" style="left:9px;top:2.5px;width:31px;height:20px;background:#2b2b2b;border-color:#454545"></div>
  <svg style="left:13px;top:5px" width="15" height="15" viewBox="0 0 15 15"><rect x=".6" y=".8" width="13.500" height="5.600" rx="2.800" fill="none" stroke="#e0e0e0" stroke-width="1.200"/><rect x=".6" y="8.400" width="13.500" height="5.600" rx="2.800" fill="none" stroke="#e0e0e0" stroke-width="1.200"/><path d="M3.400.8h3.600v5.600h-3.600a2.800 2.800 0 0 1 0-5.600zM3.400 8.400h6.600v5.600h-6.600a2.800 2.800 0 0 1 0-5.600z" fill="#e0e0e0"/></svg>
  <svg style="left:29px;top:10px" width="8" height="6" viewBox="0 0 8 6"><path d="M1 1l3 3.200 3-3.200" fill="none" stroke="#c0c0c0" stroke-width="1.400"/></svg>
  <svg style="left:53px;top:4px" width="16" height="16" viewBox="0 0 16 16"><path d="M4.500 1.500 L8 10 Q8 12.500 5 12.500 L3.500 12.500 Q1 12.500 1.200 10 Z" fill="#d8d8d8"/><circle cx="11.700" cy="3.600" r="1.900" fill="#d8d8d8"/><circle cx="10.200" cy="11" r="3.200" fill="#393939" stroke="#d8d8d8" stroke-width="1.200"/></svg>
  <span class="t" style="left:77.5px;top:5px;font-size:11.100px">Scene</span>
  <svg style="left:150px;top:4px" width="16" height="16" viewBox="0 0 16 16"><path d="M9.500 1.500l5 5-1.500.5-2.500 2.500.3 3.500-2 1-6.300-6.300 1-2 3.500.3 2.500-2.500zM5.500 10.500l-4.500 4.500" fill="none" stroke="#b8b8b8" stroke-width="1.100" stroke-linejoin="round"/></svg>
  <div style="left:2px;top:34px;width:26px;height:27px;background:#2e2e2e;border-radius:4px 0 0 4px"></div>
  <div style="left:2px;top:70.5px;width:26px;height:26.0px;background:#2e2e2e;border-radius:4px 0 0 4px"></div>
  <div style="left:2px;top:98px;width:26px;height:26.5px;background:#424242;border-radius:4px 0 0 4px"></div>
  <div style="left:2px;top:126px;width:26px;height:26.5px;background:#2e2e2e;border-radius:4px 0 0 4px"></div>
  <div style="left:2px;top:154.5px;width:26px;height:26.0px;background:#2e2e2e;border-radius:4px 0 0 4px"></div>
  <div style="left:2px;top:182.5px;width:26px;height:26.0px;background:#2e2e2e;border-radius:4px 0 0 4px"></div>
  <div style="left:2px;top:226px;width:26px;height:27px;background:#2e2e2e;border-radius:4px 0 0 4px"></div>
  <svg style="left:7px;top:39px" width="17" height="17" viewBox="0 0 17 17"><path d="M3.500 .8v6.200" stroke="#dcdcdc" stroke-width="1.300"/><rect x="1" y="8" width="5.200" height="1.400" fill="#dcdcdc"/><ellipse cx="3.600" cy="12.300" rx="2.500" ry="2.700" fill="#dcdcdc"/><path d="M8.700 1q-1.500 2-.4 4 .8 1.300 2.200 1.700v7.300q1.200 1.500 2.800 0v-7.300q1.400-.4 2.200-1.700 1.100-2-.4-4l-.9 2.900-1.300 1h-2l-1.300-1z" fill="#dcdcdc"/><circle cx="11.900" cy="13.300" r=".7" fill="#2e2e2e"/></svg>
  <svg style="left:7.5px;top:75.5px" width="15" height="14" viewBox="0 0 15 14"><path d="M3 3.200l1-2h3.500l1 2" fill="none" stroke="#dcdcdc" stroke-width="1.200"/><path d="M11.500 1h2" stroke="#dcdcdc" stroke-width="1"/><rect x=".9" y="3.200" width="13.200" height="10" rx="1" fill="none" stroke="#dcdcdc" stroke-width="1.500"/><rect x="2.600" y="5" width="6.800" height="6.500" fill="#cfcfcf"/><path d="M2.800 6.700h6.400M2.800 8.300h6.400M2.800 9.900h6.400" stroke="#3a3a3a" stroke-width=".8"/><rect x="11" y="5" width="1.900" height="2" fill="#dcdcdc"/><rect x="11" y="9" width="1.900" height="2.200" fill="#dcdcdc"/></svg>
  <svg style="left:7.5px;top:103.8px" width="15" height="15" viewBox="0 0 15 15"><path d="M.4 2q0-1.600 1.600-1.600h11q1.600 0 1.600 1.600v5.800h-2v-3.400h-10.200v3.400h-2z" fill="#f4f4f4"/><rect x="3.400" y="4.600" width="8.200" height="9.800" fill="#bdbdbd"/><path d="M4.600 12.600l2.600-4 2.600 4z" fill="#404040"/><rect x="8.800" y="7" width="1.600" height="1.600" fill="#404040"/></svg>
  <svg style="left:7.5px;top:131px" width="15.500" height="15.500" viewBox="0 0 17 17"><path d="M1.500 5.500v10h10" fill="none" stroke="#d0d0d0" stroke-width="1.200"/><path d="M3.700 3.500v10h10" fill="none" stroke="#d0d0d0" stroke-width="1.200"/><rect x="5.800" y=".8" width="10.400" height="10.800" fill="#d0d0d0"/><path d="M6.800 10.500l3-5 2 3 1.200-1.200 2.200 3.200z" fill="#2e2e2e"/><rect x="12.800" y="2.600" width="1.800" height="1.800" fill="#2e2e2e"/></svg>
  <svg style="left:7px;top:159px" width="16" height="16" viewBox="0 0 16 16"><path d="M5 .8L7.800 9.500Q7.800 12.300 5 12.300L3.200 12.300Q.6 12.300 .9 9.500Z" fill="#d8d8d8"/><circle cx="12.900" cy="2.800" r="2" fill="#d8d8d8"/><circle cx="10.900" cy="10.600" r="3.600" fill="#2e2e2e" stroke="#d8d8d8" stroke-width="1.200"/><path d="M8.800 10a2.300 2.300 0 0 1 2.500-1.900" fill="none" stroke="#d8d8d8" stroke-width=".8"/></svg>
  <svg style="left:7px;top:187px" width="16" height="16" viewBox="0 0 16 16"><circle cx="8" cy="7.800" r="6.200" fill="none" stroke="#d9636f" stroke-width="1.300"/><path d="M3.300 4.500q2.300-2.300 5-2 1 1.400-.5 2.300l-1.800.7q-.6 1.200.5 2l2.300.4q1.200.8.800 2.300l-1.300 2q-1.300.2-1.700-1.500l-.3-1.900-2-1.400q-1.200-1.300-1-2.900zM11 4.200q1.800 1 2.200 3-.8.600-1.800-.2-.8-1.300-.4-2.800z" fill="#d9636f"/><path d="M1.200 14.400l13.600-12.800" stroke="#d9636f" stroke-width="1"/></svg>
  <svg style="left:8px;top:232.3px" width="14" height="13.700" viewBox="0 0 14 13.700"><rect width="14" height="13.700" fill="#d9636f"/><g fill="#38262a"><rect x="2.60" y="2.30" width="2.750" height="2.750"/><rect x="8.10" y="2.30" width="2.750" height="2.750"/><rect x="5.35" y="5.05" width="2.750" height="2.750"/><rect x="10.85" y="5.05" width="2.750" height="2.750"/><rect x="2.60" y="7.80" width="2.750" height="2.750"/><rect x="8.10" y="7.80" width="2.750" height="2.750"/><rect x="5.35" y="10.55" width="2.750" height="2.750"/><rect x="10.85" y="10.55" width="2.750" height="2.750"/></g></svg>
  <div style="left:28px;top:25px;width:148px;height:24px;background:#474747"></div>
  <svg style="left:37px;top:34px" width="6.500" height="5.800" viewBox="0 0 8 7"><path d="M0 0h8l-4 7z" fill="#a8a8a8"/></svg>
  <span class="t" style="left:50px;top:29px;font-size:12.600px;line-height:16px;height:16px;color:#e4e4e4">Размеры</span>
  <svg style="left:125px;top:30px" width="16" height="14" viewBox="0 0 16 14"><g fill="#c8c8c8"><circle cx="1.600" cy="1.800" r="1.300"/><circle cx="1.600" cy="7" r="1.300"/><circle cx="1.600" cy="12.200" r="1.300"/></g><path d="M5 1.800h10M5 7h10M5 12.200h10" stroke="#c8c8c8" stroke-width="1.300"/></svg>
  <svg style="left:155px;top:35px" width="11" height="5" viewBox="0 0 11 5"><g fill="#1c1c1c"><rect x="0" y="0" width="1.500" height="1.500"/><rect x="3" y="0" width="1.500" height="1.500"/><rect x="6" y="0" width="1.500" height="1.500"/><rect x="9" y="0" width="1.500" height="1.500"/><rect x="0" y="3" width="1.500" height="1.500"/><rect x="3" y="3" width="1.500" height="1.500"/><rect x="6" y="3" width="1.500" height="1.500"/><rect x="9" y="3" width="1.500" height="1.500"/></g></svg>
  <div class="num" style="left:102px;top:58px;width:64px;height:18.5px;background:#565656;border-radius:4px 4px 0 0;line-height:18.5px">1920 px</div>
  <span class="t" style="right:82.700px;top:60px;font-size:11.200px;color:#dadada">Разреше..</span>
  <div class="num" style="left:102px;top:77.5px;width:64px;height:18.5px;background:#565656;border-radius:0;line-height:18.5px">1080 px</div>
  <span class="t" style="right:82.700px;top:80px;font-size:11.200px;color:#dadada">Y</span>
  <div class="num" style="left:102px;top:97px;width:64px;height:19px;background:#4b76be;border-radius:0 0 4px 4px;line-height:19px">100%</div>
  <span class="t" style="right:82.700px;top:100px;font-size:11.200px;color:#dadada">%</span>
  <div class="num" style="left:102px;top:123px;width:64px;height:18.5px;background:#565656;border-radius:4px 4px 0 0;line-height:18.5px">1.000</div>
  <span class="t" style="right:82.700px;top:125px;font-size:11.200px;color:#dadada">Соотнош..</span>
  <div class="num" style="left:102px;top:142.5px;width:64px;height:18.5px;background:#565656;border-radius:0 0 4px 4px;line-height:18.5px">1.000</div>
  <span class="t" style="right:82.700px;top:145px;font-size:11.200px;color:#dadada">Y</span>
  <span class="t" style="right:34px;top:170px;font-size:11.200px">Область рендера</span>
  <div style="left:151px;top:171px;width:12.500px;height:12.500px;background:#666;border-radius:3px"></div>
  <span class="t" style="right:34px;top:190px;font-size:11.200px;color:#858585">Обрезат.. рендера</span>
  <div style="left:151px;top:191px;width:12.500px;height:12.500px;background:#4c4c4c;border-radius:3px"></div>
  <div class="num" style="left:102px;top:213px;width:64px;height:18.300px;background:#565656;border-radius:4px 4px 0 0;line-height:18.500px">1</div>
  <span class="t" style="right:82.700px;top:214.500px;font-size:11.200px;color:#dadada">Кадр нач..</span>
  <div class="num" style="left:102px;top:232.200px;width:64px;height:18.500px;background:#565656;border-radius:0;line-height:18.500px">250</div>
  <span class="t" style="right:82.700px;top:235px;font-size:11.200px;color:#dadada">Конец</span>
  <div class="num" style="left:102px;top:251.600px;width:64px;height:19.900px;background:#565656;border-radius:0 0 4px 4px;line-height:19.900px">1</div>
  <span class="t" style="right:82.700px;top:255px;font-size:11.200px;color:#dadada">Шаг</span>
  <span class="t" style="left:37px;top:280px;font-size:11.200px;color:#dadada">Частота ..</span>
  <div class="dd" style="left:105px;top:277.700px;width:61.500px;height:19.300px;background:#2b2b2b;border-color:#454545"></div>
  <span class="t" style="left:113px;top:280px;font-size:12px">25 ка..</span>
  <svg style="left:155px;top:285px" width="8" height="6" viewBox="0 0 8 6"><path d="M1 1l3 3.200 3-3.200" fill="none" stroke="#c0c0c0" stroke-width="1.400"/></svg>
</div>

<!-- ===== Sequencer area ===== -->
<div id="sq" style="left:1px;top:360px;width:1022px;height:318.500px;background:#2b2b2b;border-radius:5px;overflow:hidden">
  <div style="left:0;top:24.5px;width:737px;height:23.0px;background:#2a2a2a"></div>
  <div style="left:0;top:47.5px;width:737px;height:17.5px;background:#313131"></div>
  <div style="left:0;top:65px;width:737px;height:36.8px;background:#272727"></div>
  <div style="left:0;top:101.8px;width:737px;height:36.8px;background:#313131"></div>
  <div style="left:0;top:138.6px;width:737px;height:36.8px;background:#272727"></div>
  <div style="left:0;top:175.4px;width:737px;height:36.8px;background:#313131"></div>
  <div style="left:0;top:212.2px;width:737px;height:36.8px;background:#272727"></div>
  <div style="left:0;top:249px;width:737px;height:36.8px;background:#313131"></div>
  <div style="left:0;top:285.8px;width:737px;height:34.2px;background:#2a2a2a"></div>
  <div style="left:108px;top:47.5px;width:1px;height:271px;background:rgba(255,255,255,.07)"></div>
  <div style="left:176px;top:47.5px;width:1px;height:271px;background:rgba(255,255,255,.07)"></div>
  <div style="left:245px;top:47.5px;width:1px;height:271px;background:rgba(255,255,255,.07)"></div>
  <div style="left:313px;top:47.5px;width:1px;height:271px;background:rgba(255,255,255,.07)"></div>
  <div style="left:381px;top:47.5px;width:1px;height:271px;background:rgba(255,255,255,.07)"></div>
  <div style="left:449px;top:47.5px;width:1px;height:271px;background:rgba(255,255,255,.07)"></div>
  <div style="left:518px;top:47.5px;width:1px;height:271px;background:rgba(255,255,255,.07)"></div>
  <div style="left:586px;top:47.5px;width:1px;height:271px;background:rgba(255,255,255,.07)"></div>
  <div style="left:654px;top:47.5px;width:1px;height:271px;background:rgba(255,255,255,.07)"></div>
  <div style="left:722px;top:47.5px;width:1px;height:271px;background:rgba(255,255,255,.07)"></div>
  <span class="t" style="left:78.0px;top:30px;width:60px;text-align:center;font-size:13px;color:#a0a0a0">1+00</span>
  <span class="t" style="left:146.1px;top:30px;width:60px;text-align:center;font-size:13px;color:#a0a0a0">2+00</span>
  <span class="t" style="left:214.2px;top:30px;width:60px;text-align:center;font-size:13px;color:#a0a0a0">3+00</span>
  <span class="t" style="left:282.3px;top:30px;width:60px;text-align:center;font-size:13px;color:#a0a0a0">4+00</span>
  <span class="t" style="left:350.4px;top:30px;width:60px;text-align:center;font-size:13px;color:#a0a0a0">5+00</span>
  <span class="t" style="left:418.5px;top:30px;width:60px;text-align:center;font-size:13px;color:#a0a0a0">6+00</span>
  <span class="t" style="left:486.6px;top:30px;width:60px;text-align:center;font-size:13px;color:#a0a0a0">7+00</span>
  <span class="t" style="left:554.7px;top:30px;width:60px;text-align:center;font-size:13px;color:#a0a0a0">8+00</span>
  <span class="t" style="left:622.8px;top:30px;width:60px;text-align:center;font-size:13px;color:#a0a0a0">9+00</span>
  <span class="t" style="left:2px;top:76.5px;width:14px;text-align:center;font-size:12px;color:#d0d0d0;transform:rotate(-90deg);will-change:transform">6</span>
  <span class="t" style="left:2px;top:113.3px;width:14px;text-align:center;font-size:12px;color:#d0d0d0;transform:rotate(-90deg);will-change:transform">5</span>
  <span class="t" style="left:2px;top:150px;width:14px;text-align:center;font-size:12px;color:#d0d0d0;transform:rotate(-90deg);will-change:transform">4</span>
  <span class="t" style="left:2px;top:186.8px;width:14px;text-align:center;font-size:12px;color:#d0d0d0;transform:rotate(-90deg);will-change:transform">3</span>
  <span class="t" style="left:2px;top:223.6px;width:14px;text-align:center;font-size:12px;color:#d0d0d0;transform:rotate(-90deg);will-change:transform">2</span>
  <span class="t" style="left:2px;top:260.4px;width:14px;text-align:center;font-size:12px;color:#d0d0d0;transform:rotate(-90deg);will-change:transform">1</span>
  <div style="left:41px;top:46px;width:1.500px;height:274px;background:#080808"></div>
  <div style="left:41px;top:214px;width:696px;height:34.5px;background:#0d0d0d"></div>
  <div style="left:41px;top:215.5px;width:696px;height:31.5px;background:#566c8e"></div>
  <div style="left:41px;top:215.5px;width:29px;height:31.5px;background:#62789a"></div>
  <svg style="left:50px;top:224px" width="11" height="15" viewBox="0 0 11 15"><path d="M0 0l11 7.500-11 7.500z" fill="#47597a"/></svg>
  <span class="t" style="left:80px;top:224px;color:#0a0a0a;font-size:11.550px">Танцевальная машина.001: F:\Фильмы художественные\Танцевальная машина.avi | 159010</span>
  <div style="left:41px;top:249.500px;width:696px;height:37px;background:#0d0d0d"></div>
  <div style="left:41px;top:251px;width:696px;height:34px;background:#b4f2f0"></div>
  <div style="left:41px;top:252.200px;width:696px;height:31.600px;background:#005f5f"></div>
  <div style="left:41px;top:252.200px;width:29px;height:31.600px;background:#1c7272"></div>
  <svg style="left:50px;top:260.5px" width="11" height="15" viewBox="0 0 11 15"><path d="M0 0l11 7.500-11 7.500z" fill="#0c5454"/></svg>
  <span class="t" style="left:80px;top:261px;color:#f4f4f4;font-size:11.550px">Танцевальная машина.avi: F:\Фильмы художественные\Танцевальная машина.avi | 159010</span>
  <div style="left:41px;top:304px;width:682px;height:4px;background:rgba(200,90,50,.16)"></div>
  <div style="left:39px;top:46px;width:2px;height:274px;background:#4b76be"></div>
  <div style="left:41px;top:304px;width:10px;height:4px;background:#8e4a32"></div>
  <div style="left:54px;top:304px;width:3px;height:4px;background:#8e4a32"></div>
  <div style="left:108px;top:304px;width:3px;height:4px;background:#8e4a32"></div>
  <div style="left:128px;top:304px;width:2px;height:4px;background:#8e4a32"></div>
  <div style="left:179px;top:304px;width:3px;height:4px;background:#8e4a32"></div>
  <div style="left:218px;top:304px;width:2px;height:4px;background:#8e4a32"></div>
  <div style="left:242px;top:304px;width:8px;height:4px;background:#8e4a32"></div>
  
  
  <div style="left:20px;top:27px;width:40.500px;height:19px;background:#4c78c0;border-radius:5px;text-align:center;line-height:18.500px;font-size:13px;color:#fff">0+00</div>
  <div style="left:7px;top:308px;width:30px;height:9px;background:#5a5a5a;border-radius:5px"></div>
  <div style="left:8.5px;top:309.5px;width:6px;height:6px;background:#6e6e6e;border-radius:3px"></div>
  <div style="left:29.5px;top:309.5px;width:6px;height:6px;background:#6e6e6e;border-radius:3px"></div>
  <div style="left:725.5px;top:60px;width:8.800px;height:237px;background:#6a6a6a;border-radius:5px"></div>
  <div style="left:727px;top:289.500px;width:6px;height:6px;background:#585858;border-radius:4px"></div>
  <div id="sqhead" style="left:0;top:0;width:1023px;height:25px;background:#363636"></div>
  <div class="dd" style="left:8px;top:3px;width:31px;height:20px;background:#2b2b2b;border-color:#444"></div>
  <svg style="left:12px;top:5px" width="15" height="15" viewBox="0 0 15 15"><rect x="1.400" y="3.500" width="1.900" height="3.400" fill="none" stroke="#dcdcdc" stroke-width=".8"/><path d="M5.200 2.600l2-.6.400 1.400-2 .6zM7.900 1.800l2-.6.400 1.400-2 .6zM10.700 1l2-.6.400 1.400-2 .6z" fill="#dcdcdc"/><path d="M5.200 7.300h8.500" stroke="#dcdcdc" stroke-width=".9"/><rect x="2" y="9.200" width="11.900" height="5.400" fill="#dcdcdc"/></svg>
  <svg style="left:29px;top:10px" width="8" height="6" viewBox="0 0 8 6"><path d="M1 1l3 3.200 3-3.200" fill="none" stroke="#c0c0c0" stroke-width="1.400"/></svg>
  <div class="dd" style="left:44.5px;top:3px;width:166px;height:20px;background:#2b2b2b;border-color:#444"></div>
  <svg style="left:49px;top:5px" width="15" height="15" viewBox="0 0 15 15"><g fill="none" stroke="#dcdcdc" stroke-width="1.200"><rect x="3.200" y="1.300" width="10.600" height="3.600" rx=".3"/><rect x=".8" y="4.900" width="10.600" height="3.400" rx=".3" fill="#2b2b2b"/><rect x="2.800" y="11" width="11" height="3.300" rx=".3"/></g></svg>
  <span class="t" style="left:70.5px;top:6px">Видеоредактор</span>
  <svg style="left:200px;top:10px" width="8" height="6" viewBox="0 0 8 6"><path d="M1 1l3 3.200 3-3.200" fill="none" stroke="#c0c0c0" stroke-width="1.400"/></svg>
  <span class="t" style="left:223.5px;top:6px">Вид</span>
  <span class="t" style="left:259px;top:6px">Выделение</span>
  <span class="t" style="left:335px;top:6px">Маркер</span>
  <span class="t" style="left:389px;top:6px">Добавить</span>
  <span class="t" style="left:454px;top:6px">Дорожка</span>
  <div style="left:737px;top:25px;width:266px;height:295px;background:#404040"></div>
  <div style="left:1003px;top:25px;width:20px;height:295px;background:#222"></div>
  <div style="left:1003px;top:32px;width:17px;height:55px;background:#474747;border-radius:0 4px 4px 0"></div>
  <span class="t" style="left:983.5px;top:52.0px;width:54px;text-align:center;transform:rotate(-90deg);will-change:transform;color:#e6e6e6">Дорожка</span>
  <div style="left:1003px;top:93px;width:17px;height:93px;background:#2e2e2e;border-radius:0 4px 4px 0"></div>
  <span class="t" style="left:964.0px;top:132.5px;width:93px;text-align:center;transform:rotate(-90deg);will-change:transform;color:#e6e6e6">Модификаторы</span>
  <div style="left:1003px;top:191px;width:17px;height:84.5px;background:#2e2e2e;border-radius:0 4px 4px 0"></div>
  <span class="t" style="left:968.25px;top:226.25px;width:84.5px;text-align:center;transform:rotate(-90deg);will-change:transform;color:#e6e6e6">Прокси и кэш</span>
  <div style="left:1003px;top:281px;width:17px;height:31px;background:#2e2e2e;border-radius:0 4px 4px 0"></div>
  <span class="t" style="left:995.0px;top:289.5px;width:31px;text-align:center;transform:rotate(-90deg);will-change:transform;color:#e6e6e6">Вид</span>
  <svg style="left:747.500px;top:35.500px" width="16" height="15" viewBox="0 0 16 15"><path d="M5 12.500v-11.500h9.500v10.500" fill="none" stroke="#f0f0f0" stroke-width="1.300"/><path d="M5 1.600h9.500" stroke="#f0f0f0" stroke-width="1.800"/><ellipse cx="3.300" cy="12.600" rx="2.500" ry="1.900" transform="rotate(-15 3.300 12.600)" fill="#f0f0f0"/><ellipse cx="12.700" cy="11.700" rx="2.500" ry="1.900" transform="rotate(-15 12.700 11.700)" fill="#f0f0f0"/></svg>
  <div class="fld" style="left:774px;top:34px;width:192px;height:18px"></div>
  <span class="t" style="left:781px;top:36px">Танцевальная машина.avi</span>
  <div style="left:979.5px;top:38px;width:10.500px;height:10.500px;background:#e6e6e6;border-radius:2px"></div>
  <svg style="left:980.5px;top:39.5px" width="9" height="8" viewBox="0 0 9 8"><path d="M1 4l2.500 2.500 4.500-5.500" fill="none" stroke="#222" stroke-width="1.800"/></svg>
  <svg style="left:745.5px;top:69.0px" width="6" height="7" viewBox="0 0 6 7"><path d="M0 0l6 3.500-6 3.500z" fill="#b4b4b4"/></svg>
  <span class="t" style="left:759px;top:66px;font-size:12.600px;line-height:16px;height:16px;color:#e4e4e4">Коррекция</span>
  <svg style="left:984px;top:71.0px" width="11" height="5" viewBox="0 0 11 5"><g fill="#1c1c1c"><rect x="0" y="0" width="1.500" height="1.500"/><rect x="3" y="0" width="1.500" height="1.500"/><rect x="6" y="0" width="1.500" height="1.500"/><rect x="9" y="0" width="1.500" height="1.500"/><rect x="0" y="3" width="1.500" height="1.500"/><rect x="3" y="3" width="1.500" height="1.500"/><rect x="6" y="3" width="1.500" height="1.500"/><rect x="9" y="3" width="1.500" height="1.500"/></g></svg>
  <svg style="left:745.5px;top:93.0px" width="6" height="7" viewBox="0 0 6 7"><path d="M0 0l6 3.500-6 3.500z" fill="#b4b4b4"/></svg>
  <span class="t" style="left:759px;top:90px;font-size:12.600px;line-height:16px;height:16px;color:#e4e4e4">Время</span>
  <svg style="left:984px;top:95.0px" width="11" height="5" viewBox="0 0 11 5"><g fill="#1c1c1c"><rect x="0" y="0" width="1.500" height="1.500"/><rect x="3" y="0" width="1.500" height="1.500"/><rect x="6" y="0" width="1.500" height="1.500"/><rect x="9" y="0" width="1.500" height="1.500"/><rect x="0" y="3" width="1.500" height="1.500"/><rect x="3" y="3" width="1.500" height="1.500"/><rect x="6" y="3" width="1.500" height="1.500"/><rect x="9" y="3" width="1.500" height="1.500"/></g></svg>
  <svg style="left:745.5px;top:117.0px" width="6" height="7" viewBox="0 0 6 7"><path d="M0 0l6 3.500-6 3.500z" fill="#b4b4b4"/></svg>
  <span class="t" style="left:759px;top:114px;font-size:12.600px;line-height:16px;height:16px;color:#e4e4e4">Источник</span>
  <svg style="left:984px;top:119.0px" width="11" height="5" viewBox="0 0 11 5"><g fill="#1c1c1c"><rect x="0" y="0" width="1.500" height="1.500"/><rect x="3" y="0" width="1.500" height="1.500"/><rect x="6" y="0" width="1.500" height="1.500"/><rect x="9" y="0" width="1.500" height="1.500"/><rect x="0" y="3" width="1.500" height="1.500"/><rect x="3" y="3" width="1.500" height="1.500"/><rect x="6" y="3" width="1.500" height="1.500"/><rect x="9" y="3" width="1.500" height="1.500"/></g></svg>
  <svg style="left:745.5px;top:141.0px" width="6" height="7" viewBox="0 0 6 7"><path d="M0 0l6 3.500-6 3.500z" fill="#b4b4b4"/></svg>
  <span class="t" style="left:759px;top:138px;font-size:12.600px;line-height:16px;height:16px;color:#e4e4e4">Настраиваемые свойства</span>
  <svg style="left:984px;top:143.0px" width="11" height="5" viewBox="0 0 11 5"><g fill="#1c1c1c"><rect x="0" y="0" width="1.500" height="1.500"/><rect x="3" y="0" width="1.500" height="1.500"/><rect x="6" y="0" width="1.500" height="1.500"/><rect x="9" y="0" width="1.500" height="1.500"/><rect x="0" y="3" width="1.500" height="1.500"/><rect x="3" y="3" width="1.500" height="1.500"/><rect x="6" y="3" width="1.500" height="1.500"/><rect x="9" y="3" width="1.500" height="1.500"/></g></svg>
  <svg style="left:965px;top:90px" width="15" height="12" viewBox="0 0 15 12"><path d="M1 5.500v-2a2.500 2.500 0 0 1 5 0v2" fill="none" stroke="#9a9a9a" stroke-width="1"/><rect x="5.500" y="5.500" width="8.500" height="6" fill="none" stroke="#9a9a9a" stroke-width="1"/><rect x="9" y="7.800" width="1.500" height="1.500" fill="#9a9a9a"/></svg>
  <div style="left:729.100px;top:18px;width:53px;height:48.800px;border:5px solid #fe0000"></div>
  <svg style="left:0;top:0" width="1023" height="320" viewBox="1 360 1023 320"><path d="M615 528L546.500 562.600 553 570 497 619.800 509.600 633.600 565.600 584.600 573.300 592.300z" fill="#fe0000"/></svg>
</div>

<!-- ===== Timeline header ===== -->
<div id="tl" style="left:1px;top:682px;width:1022px;height:24.500px;background:#383838;border-radius:5px;overflow:hidden">
  <div class="dd" style="left:8px;top:3px;width:31px;height:20px;background:#2b2b2b;border-color:#444"></div>
  <svg style="left:12px;top:6px" width="14" height="14" viewBox="0 0 14 14"><circle cx="7" cy="7" r="6.500" fill="#e6e6e6"/><path d="M9.500 2.500l-3 4.500 3 4" fill="none" stroke="#2b2b2b" stroke-width="1.500"/></svg>
  <svg style="left:29px;top:10px" width="8" height="6" viewBox="0 0 8 6"><path d="M1 1l3 3.200 3-3.200" fill="none" stroke="#c0c0c0" stroke-width="1.400"/></svg>
  <div class="dd" style="left:45px;top:3px;width:120px;height:20px;background:#2b2b2b;border-color:#444;border-radius:4px 0 0 4px"></div>
  <span class="t" style="left:52px;top:6px">Воспроизведение</span>
  <svg style="left:153px;top:10px" width="8" height="6" viewBox="0 0 8 6"><path d="M1 1l3 3.200 3-3.200" fill="none" stroke="#c0c0c0" stroke-width="1.400"/></svg>
  <div class="dd" style="left:164px;top:3px;width:57px;height:20px;background:#2b2b2b;border-color:#444;border-radius:0 4px 4px 0"></div>
  <span class="t" style="left:171px;top:6px">Кеинг</span>
  <svg style="left:210px;top:10px" width="8" height="6" viewBox="0 0 8 6"><path d="M1 1l3 3.200 3-3.200" fill="none" stroke="#c0c0c0" stroke-width="1.400"/></svg>
  <span class="t" style="left:228px;top:6px">Вид</span>
  <span class="t" style="left:264px;top:6px">Маркер</span>
  <div class="b" style="left:429px;top:4px;width:18px;height:18px"></div>
  <div style="left:434px;top:9px;width:8px;height:8px;border-radius:4px;background:#e8e8e8"></div>
  <div style="left:454px;top:4px;width:118px;height:18px;background:#555;border-radius:3px"></div>
  <div style="left:472.4px;top:4px;width:1px;height:18px;background:#3c3c3c"></div>
  <div style="left:492.3px;top:4px;width:1px;height:18px;background:#3c3c3c"></div>
  <div style="left:512.3px;top:4px;width:1px;height:18px;background:#3c3c3c"></div>
  <div style="left:532.3px;top:4px;width:1px;height:18px;background:#3c3c3c"></div>
  <div style="left:552.3px;top:4px;width:1px;height:18px;background:#3c3c3c"></div>
  <svg style="left:457px;top:6.5px" width="16" height="13" viewBox="0 0 16 13"><path d="M2 1.500v10" stroke="#eee" stroke-width="1.700"/><path d="M11.500 1.500v10l-7.500-5z" fill="#eee"/></svg>
  <svg style="left:474.5px;top:6.5px" width="16" height="13" viewBox="0 0 16 13"><path d="M5 1.500l4.800 5-4.800 5-4.800-5z" fill="#eee"/><path d="M15.800 3v7l-5-3.500z" fill="#eee"/></svg>
  <svg style="left:496px;top:6.5px" width="16" height="13" viewBox="0 0 16 13"><path d="M12 0v13l-11-6.500z" fill="#eee"/></svg>
  <svg style="left:515px;top:6.5px" width="16" height="13" viewBox="0 0 16 13"><path d="M1.500 0v13l11-6.500z" fill="#eee"/></svg>
  <svg style="left:534px;top:6.5px" width="16" height="13" viewBox="0 0 16 13"><path d="M11 1.500l4.800 5-4.800 5-4.800-5z" fill="#eee"/><path d="M.2 3v7l5-3.500z" fill="#eee"/></svg>
  <svg style="left:555.5px;top:6.5px" width="16" height="13" viewBox="0 0 16 13"><path d="M11.500 1.500v10" stroke="#eee" stroke-width="1.700"/><path d="M2 1.500v10l7.500-5z" fill="#eee"/></svg>
  <div class="num" style="left:709px;top:4px;width:73px;height:18px;border-radius:4px">0</div>
  <div style="left:789px;top:4px;width:18px;height:18px;background:#555;border-radius:3px 0 0 3px"></div>
  <svg style="left:791px;top:5px" width="15" height="16" viewBox="0 0 15 16"><circle cx="7" cy="9" r="5.500" fill="none" stroke="#e0e0e0" stroke-width="1.200"/><path d="M7 5.500v3.500h3M5 1.500h4M7 1.500v2M11.500 3.500l1.500 1.500" fill="none" stroke="#e0e0e0" stroke-width="1.100"/></svg>
  <div style="left:808px;top:4px;width:98.500px;height:18px;background:#565656"></div>
  <div style="left:907.5px;top:4px;width:96px;height:18px;background:#565656;border-radius:0 4px 4px 0"></div>
  <span class="t" style="left:823px;top:6px;font-size:12px">Начало:</span>
  <span class="t" style="left:886px;top:6px;font-size:12px">1</span>
  <span class="t" style="left:923px;top:6px;font-size:12px">Конец:</span>
  <span class="t" style="left:969px;top:6px;font-size:12px">250</span>
</div>

<div style="left:1023px;top:21px;width:1px;height:707px;background:#050505"></div>
<!-- ===== Status bar ===== -->
<div id="st" style="left:0;top:708px;width:1023px;height:20px;background:#2d2d2d;overflow:hidden">
  <svg style="left:11px;top:3px" width="11" height="14" viewBox="0 0 11 14"><rect x=".700" y=".700" width="9.600" height="12.600" rx="3.500" fill="none" stroke="#c8c8c8" stroke-width="1.200"/><path d="M1 5.500v-2q0-2.500 2.500-2.500h1.500v4.500z" fill="#c8c8c8"/></svg>
  <svg style="left:248px;top:3px" width="11" height="14" viewBox="0 0 11 14"><rect x=".700" y=".700" width="9.600" height="12.600" rx="3.500" fill="none" stroke="#c8c8c8" stroke-width="1.200"/><rect x="4" y="2.500" width="3" height="5" rx="1" fill="#c8c8c8"/></svg>
  <span class="t" style="left:270px;top:3px;color:#adadad">Панорамировать вид</span>
  <svg style="left:484px;top:3px" width="11" height="14" viewBox="0 0 11 14"><rect x=".700" y=".700" width="9.600" height="12.600" rx="3.500" fill="none" stroke="#c8c8c8" stroke-width="1.200"/><path d="M10 5.500v-2q0-2.500-2.500-2.500h-1.500v4.500z" fill="#c8c8c8"/></svg>
  <span class="t" style="left:746px;top:3px;color:#adadad;font-size:11.600px">Collection 1 | Вершин:0 | Граней:0 | Треуг.:0 | Объекты</span>
</div>

</div>
<svg style="position:absolute;left:1023px;top:549.300px" width="14" height="21" viewBox="0 0 14 21"><path d="M.8 .8L.8 16.300 4.300 13 7.200 18.800 9.600 17.700 6.800 12.100 11.600 11.600Z" fill="#fff" stroke="#10142a" stroke-width="1"/></svg>
</body>
</html>
